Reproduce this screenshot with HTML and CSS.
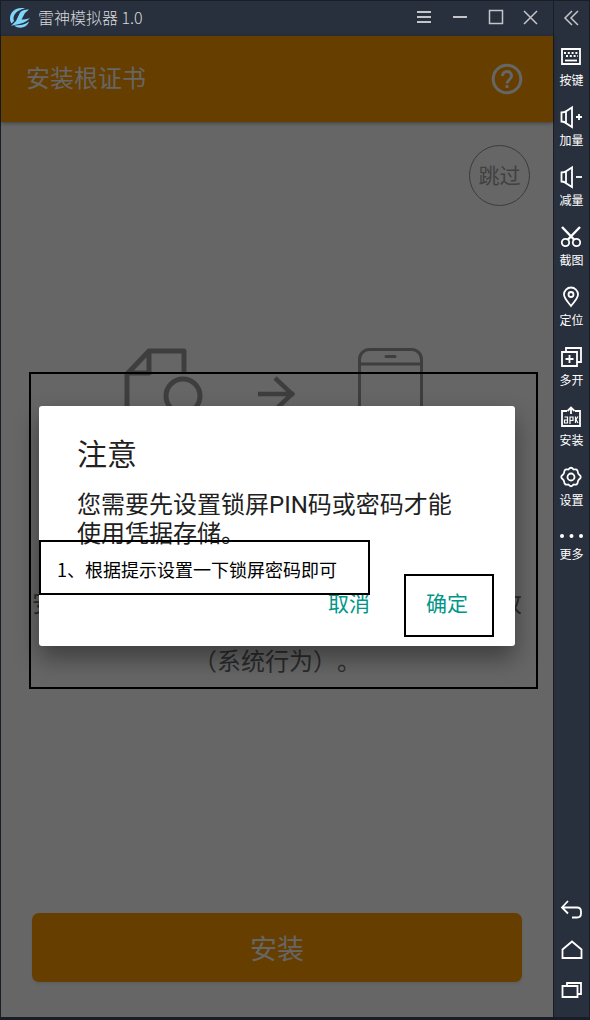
FILE: index.html
```html
<!DOCTYPE html>
<html lang="zh-CN">
<head>
<meta charset="utf-8">
<meta name="viewport" content="width=device-width">
<title>雷神模拟器 1.0</title>
<link rel="stylesheet" href="styles.css">
</head>
<body>
<div class="window">
  <div class="main">
    <header class="titlebar">
      <svg class="logo" width="22" height="22" viewBox="0 0 22 22" fill="#7fd6fa"><path d="M16 1.500C8-.5 1 4 1 11.500c0 2 .5 3.500 1.500 5L5 14C3 9 7 3 16 1.500z"/><path d="M20 2.500c-5 0-8 1-9.500 4L7 14l-5 5c6-2 14-2 19-8-3 1-6 1.500-8.500 1.500L16 6z"/><path d="M5 18.500C10 22.500 18 21 20 14.500c-4 3-9 4-15 4z"/></svg>
      <h1 class="titlebar-name">雷神模拟器 1.0</h1>
      <div class="controls">
        <button class="control" aria-label="菜单"><svg width="16" height="16" viewBox="0 0 16 16"><path d="M1 2h14M1 7h14M1 12h14"/></svg></button>
        <button class="control" aria-label="最小化"><svg width="16" height="16" viewBox="0 0 16 16"><path d="M1 7h14"/></svg></button>
        <button class="control" aria-label="最大化"><svg width="16" height="16" viewBox="0 0 16 16"><path class="thin" d="M1.500 .5h13v13h-13z"/></svg></button>
        <button class="control" aria-label="关闭"><svg width="16" height="16" viewBox="0 0 16 16"><path class="thin" d="M0 1l13 13M13 1L0 14"/></svg></button>
      </div>
    </header>
    <main class="app">
      <div class="appbar">
        <h2 class="appbar-title">安装根证书</h2>
        <button class="help" aria-label="帮助"><svg width="32" height="32" viewBox="0 0 32 32" fill="none" stroke="#666" stroke-width="3"><circle cx="16" cy="16" r="13.800"/><path d="M11.500 13c0-6 9-6 9 0 0 3.500-4.500 4-4.500 7.500M16 22v3"/></svg></button>
      </div>
      <div class="content">
        <button class="skip">跳过</button>
        <div class="illustration">
          <svg width="80" height="100" viewBox="0 0 80 100" fill="none" stroke="#3e3e3e" stroke-width="5" stroke-linejoin="round"><path d="M60 24V3H25L3 26v70h57V80M25 3v22H3"/><circle cx="59" cy="48" r="17"/></svg>
          <svg width="42" height="100" viewBox="0 0 42 100" fill="none" stroke="#3e3e3e" stroke-width="4.500"><path d="M0 46h36M17 30l17 16-17 16"/></svg>
          <svg width="76" height="100" viewBox="0 0 76 100" fill="none" stroke="#3e3e3e" stroke-width="3"><rect x="5.500" y="1.500" width="62" height="96" rx="10"/><path d="M5 16h63"/><path d="M32 8.500h9" stroke-linecap="round"/></svg>
        </div>
        <div class="message">
          <p class="message-edge"><span>安</span><span>改</span></p>
          <p>（系统行为）。</p>
        </div>
        <button class="install">安装</button>
      </div>

      <section class="dialog" role="dialog" aria-labelledby="dialog-title">
        <h2 class="dialog-title" id="dialog-title">注意</h2>
        <p class="dialog-text">您需要先设置锁屏PIN码或密码才能<br>使用凭据存储。</p>
        <div class="dialog-actions">
          <button class="action">取消</button>
          <button class="action">确定</button>
        </div>
      </section>
      <div class="mark mark-area"></div>
      <div class="mark mark-note">1、根据提示设置一下锁屏密码即可</div>
      <div class="mark mark-confirm"></div>
    </main>
  </div>

  <aside class="sidebar">
    <button class="collapse" aria-label="收起"><svg width="16" height="16" viewBox="0 0 16 16"><path d="M8 1L1 8l7 7M14 1L7 8l7 7"/></svg></button>
    <nav class="tools">
      <button class="tool"><svg viewBox="0 0 22 22"><path d="M2 3h18v15H2z"/><path d="M4 7h14M6 10h12" stroke-dasharray="2 1.800"/><path d="M5 14.500h12"/></svg>按键</button>
      <button class="tool"><svg viewBox="0 0 22 22"><path d="M1.500 6.500v9q3 0 5 2l5.500 3.500V1.500L6.500 5q-2 1.500-5 1.500zM6 5.500v11"/><path d="M16 11h6M19 8v6"/></svg>加量</button>
      <button class="tool"><svg viewBox="0 0 22 22"><path d="M1.500 6.500v9q3 0 5 2l5.500 3.500V1.500L6.500 5q-2 1.500-5 1.500zM6 5.500v11"/><path d="M16 11h6"/></svg>减量</button>
      <button class="tool"><svg viewBox="0 0 22 22"><path d="M2 1l12.500 13M20 1L7.500 14" stroke-width="2.400"/><circle cx="5.500" cy="16.500" r="3.700"/><circle cx="16.500" cy="16.500" r="3.700"/></svg>截图</button>
      <button class="tool"><svg viewBox="0 0 22 22"><path d="M11 20C7 15 4 12 4 8.500a7 7 0 0 1 14 0C18 12 15 15 11 20z"/><circle cx="11" cy="8.500" r="2.500"/></svg>定位</button>
      <button class="tool"><svg viewBox="0 0 22 22"><path d="M2 6h15v14H2zM6 6V2h15v14h-4M5.500 13h8M9.500 9v8"/></svg>多开</button>
      <button class="tool"><svg viewBox="0 0 22 22"><path d="M7 5H2v15h18V5h-5"/><path d="M11 8V2M7.500 5L11 1.500 14.500 5"/><path d="M4.500 11h3v6h-3v-3h3M10 18v-7h3v3.500h-3M15.500 10.500V17M18 10.500l-2 3 2 3.500" stroke-width="1.200"/></svg>安装</button>
      <button class="tool"><svg viewBox="0 0 22 22"><path d="M8.500 3.500Q11 0 13.500 3.500 17.500 2.500 17.800 6 18 7.800 19 8.500 22.500 11 19 13.500 18 14.200 17.800 16 17.500 19.500 13.500 18.500 11 22 8.500 18.500 4.500 19.500 4.200 16 4 14.200 3 13.500-.5 11 3 8.500 4 7.800 4.200 6 4.500 2.500 8.500 3.500z"/><circle cx="11" cy="11" r="3.500"/></svg>设置</button>
      <button class="tool tool-more"><svg viewBox="0 0 22 20"><path d="M2 10h.01M11.500 10h.01M21 10h.01" stroke-width="4" stroke-linecap="round"/></svg>更多</button>
    </nav>
    <div class="navkeys">
      <button class="navkey" aria-label="返回"><svg viewBox="0 0 22 22"><path d="M7 2L1 8.500l6 6M1 8.500h15q4 0 4 4v2q0 4-4 4h-5"/></svg></button>
      <button class="navkey" aria-label="主页"><svg viewBox="0 0 22 22"><path d="M1.500 10.500l9.500-8 9.500 8V19h-19z"/></svg></button>
      <button class="navkey" aria-label="最近任务"><svg viewBox="0 0 22 22"><path d="M1.500 7h15v11h-15zM6 7V4h14v11h-4"/></svg></button>
    </div>
  </aside>
</div>
</body>
</html>
```
FILE: styles.css
```css
* { box-sizing: border-box; }

body {
  margin: 0;
  font-family: Roboto, "Noto Sans CJK SC", sans-serif;
  text-spacing-trim: space-all;
  background: #29303d;
}

h1, h2, p { margin: 0; font-weight: 400; }

button {
  border: 0;
  padding: 0;
  background: none;
  font: inherit;
  color: inherit;
  cursor: pointer;
}

svg { display: block; overflow: visible; flex: none; }

.window {
  display: flex;
  min-height: 100vh;
  border: 1px solid #191d26;
  border-bottom-width: 3px;
}

.main { flex: 1; display: flex; flex-direction: column; min-width: 0; }

.titlebar {
  display: flex;
  align-items: center;
  height: 35px;
  padding: 0 3px 2px 8px;
  color: #d6d8dc;
}
.titlebar-name {
  margin-left: 7px;
  padding-bottom: 2px;
  font: 300 16px/24px "Noto Sans CJK SC", sans-serif;
}
.controls { display: flex; margin-left: auto; }
.control {
  display: grid;
  place-items: center;
  width: 36px;
  height: 33px;
}
.control svg { fill: none; stroke: #c4c5c8; stroke-width: 2; }
.control .thin { stroke-width: 1.5; }

.app {
  position: relative;
  flex: 1;
  display: flex;
  flex-direction: column;
  background: #666;
}
.appbar {
  display: flex;
  align-items: center;
  justify-content: space-between;
  height: 86px;
  padding: 0 30px 0 25px;
  background: #663f00;
  color: #666;
  box-shadow: 0 1px 4px rgba(0, 0, 0, .4);
}
.appbar-title { font-size: 24px; line-height: 32px; }

.content {
  flex: 1;
  display: flex;
  flex-direction: column;
  padding: 23px 31px 35px;
}
.skip {
  align-self: flex-end;
  width: 61px;
  height: 61px;
  margin-right: -8px;
  padding-bottom: 4px;
  border: 1px solid #3b3b3b;
  border-radius: 50%;
  color: #414141;
  font-size: 21px;
}
.illustration {
  display: flex;
  justify-content: center;
  gap: 54px;
  margin-top: 142px;
}
.message {
  display: grid;
  gap: 29px;
  margin-top: 142px;
  color: #2b2b2b;
  font-size: 24px;
  line-height: 29px;
  text-align: center;
}
.message-edge { display: flex; justify-content: space-between; }
.install {
  height: 69px;
  margin-top: auto;
  border-radius: 7px;
  background: #663f00;
  color: #666;
  font-size: 27px;
  box-shadow: 0 2px 3px rgba(0, 0, 0, .08);
}

.dialog {
  position: absolute;
  top: 370px;
  left: 38px;
  right: 38px;
  padding: 29px 38px 22px;
  border-radius: 3px;
  background: #fff;
  color: #212121;
  box-shadow: 0 12px 24px rgba(0, 0, 0, .4);
}
.dialog-title { font-size: 30px; line-height: 40px; }
.dialog-text {
  margin-top: 16px;
  font-size: 24px;
  line-height: 29px;
  white-space: nowrap;
}
.dialog-actions {
  display: flex;
  justify-content: flex-end;
  gap: 38px;
  margin-top: 31px;
}
.action {
  width: 60px;
  height: 44px;
  color: #009688;
  font-size: 21px;
}

.mark { position: absolute; border: 2px solid #000; pointer-events: none; }
.mark-area { top: 336px; left: 28px; right: 15px; height: 317px; }
.mark-note {
  top: 504px;
  left: 38px;
  padding: 15px 31px 12px 16px;
  color: #000;
  font: 18px/24px "Noto Sans CJK SC", sans-serif;
}
.mark-confirm { top: 538px; right: 59px; width: 90px; height: 63px; }

.sidebar {
  display: flex;
  flex-direction: column;
  align-items: center;
  width: 36px;
  padding-bottom: 16px;
  border-left: 1px solid #191d26;
  color: #fff;
}
.sidebar svg { fill: none; stroke: #fff; stroke-width: 1.8; }
.collapse { display: grid; place-items: center; width: 34px; height: 34px; }
.sidebar .collapse svg { stroke: #c4c5c8; stroke-width: 1.5; }
.tools { display: grid; gap: 18px; margin-top: 11px; }
.tool {
  display: grid;
  justify-items: center;
  gap: 4px;
  font: 12px/16px "Noto Sans CJK SC", sans-serif;
}
.tool svg, .navkey svg { width: 22px; height: 22px; }
.tool-more { gap: 0; }
.tool-more svg { height: 20px; }
.navkeys { display: grid; gap: 18px; margin-top: auto; }
```
